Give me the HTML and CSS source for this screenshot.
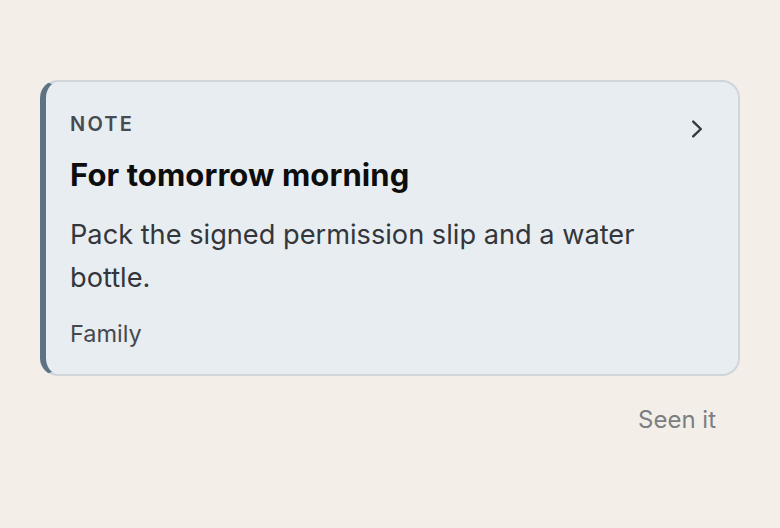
FILE: index.html
```html
<!DOCTYPE html>
<html>
<head>
<meta charset="utf-8">
<link rel="stylesheet" href="styles.css">
</head>
<body>
<div class="wrap">
  <div class="card">
    <div class="content">
      <div class="label">NOTE</div>
      <div class="title">For tomorrow morning</div>
      <div class="body">Pack the signed permission slip and a water bottle.</div>
      <div class="meta">Family</div>
    </div>
    <div class="chev">
      <svg width="14" height="20" viewBox="0 0 14 20"><path d="M3.2 2.6 L10.8 10 L3.2 17.4" fill="none" stroke="#33393f" stroke-width="2.4" stroke-linecap="round" stroke-linejoin="round"/></svg>
    </div>
  </div>
  <div class="actions"><span class="seen">Seen it</span></div>
</div>
</body>
</html>
```
FILE: styles.css
```css
html, body { margin: 0; padding: 0; }
body {
  background: #f3eee8;
  font-family: Inter, "Noto Sans", sans-serif;
  width: 780px;
  height: 528px;
}
.wrap {
  padding: 80px 40px 0 40px;
}
.card {
  display: flex;
  justify-content: space-between;
  background: #e8edf1;
  border: 2px solid #d0d5da;
  border-left: 6px solid #5d7383;
  border-radius: 18px;
  padding: 30px 34px 26px 24px;
}
.content { width: 600px; }
.label {
  font-size: 20px;
  font-weight: 600;
  letter-spacing: 2.2px;
  color: #474b50;
  line-height: 24px;
}
.title {
  font-size: 31px;
  font-weight: 700;
  color: #0d0d0d;
  line-height: 38px;
  margin-top: 20px;
  letter-spacing: 0.1px;
}
.body {
  font-size: 27.2px;
  color: #33363a;
  line-height: 43px;
  margin-top: 19px;
}
.meta {
  font-size: 23.5px;
  color: #46494d;
  line-height: 28px;
  margin-top: 21px;
}
.chev { padding-top: 7px; }
.actions {
  display: flex;
  justify-content: flex-end;
  padding: 29px 24px 0 0;
}
.seen {
  font-size: 24px;
  color: #7b7e83;
  line-height: 30px;
}
```
